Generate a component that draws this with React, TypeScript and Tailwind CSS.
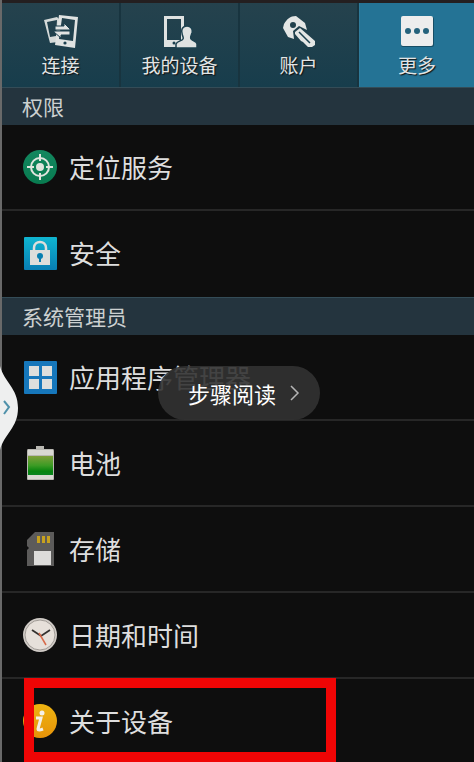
import type { ReactNode } from 'react';

function ConnectIcon() {
  return (
    <svg width="34" height="34" viewBox="0 0 34 34" aria-hidden="true">
      <path fillRule="evenodd" fill="#d5dad9" d="M0 5 13 2l2 2-1 23-8 1zM3 7l3 15 6-1 1-16z" />
      <path fillRule="evenodd" fill="#e0e3e2" d="M15 0 34 2l-3 31-20-3zM18 3l-3 21 14 2 2-21z" />
      <path fill="#e0e3e2" stroke="#1c414f" strokeWidth="1" d="M11 11h9V8l6 6v1H11zM26 16v4h-9v3l-7-6v-1z" />
      <circle cx="21" cy="28" r="1.6" fill="#1c414f" />
    </svg>
  );
}

function DeviceIcon() {
  return (
    <svg width="34" height="34" viewBox="0 0 34 34" aria-hidden="true">
      <path fillRule="evenodd" fill="#dfe2e1" d="M1 1h20v31H1zM4 4v21h14V4z" />
      <circle cx="11" cy="28" r="1.5" fill="#1c414f" />
      <path fill="#dfe2e1" stroke="#1c414f" strokeWidth="1.5" d="M24 11c4 0 6 3 5 7-1 3-2 4-1 6 1 2 6 2 6 5v4H13v-4c1-3 6-3 7-5 1-2-1-3-1-6-1-4 1-7 5-7z" />
    </svg>
  );
}

function KeyIcon() {
  return (
    <svg width="34" height="34" viewBox="0 0 34 34" aria-hidden="true">
      <path fillRule="evenodd" fill="#e4e6e5" d="M2 9C5 4 8 1 14 1l9 7 2 7-8-4-6 5 1 8-6-2-5-9zM11 7a3 3 0 1 0 0 6 3 3 0 0 0 0-6z" />
      <path fill="#e4e6e5" d="m13 17 5-4 15 13v4l-3 2h-4l-5-5-2-1-6-7z" />
      <path stroke="#1c414f" strokeWidth="1.5" d="m17 17 11 11" />
    </svg>
  );
}

function MoreIcon() {
  return (
    <svg width="34" height="34" viewBox="0 0 34 34" aria-hidden="true">
      <rect x="1" y="2" width="33" height="30" rx="2" fill="#174d65" />
      <rect x="1" y="1" width="32" height="30" rx="2" fill="#ededed" />
      <circle cx="8" cy="16" r="3" fill="#25627c" />
      <circle cx="17" cy="16" r="3" fill="#25627c" />
      <circle cx="26" cy="16" r="3" fill="#25627c" />
    </svg>
  );
}

function LocationIcon() {
  return (
    <svg width="34" height="34" viewBox="0 0 34 34" aria-hidden="true">
      <defs>
        <linearGradient id="location" x1="0" y1="0" x2="0" y2="1">
          <stop stopColor="#13875f" /><stop offset="1" stopColor="#087b50" />
        </linearGradient>
      </defs>
      <circle cx="17" cy="17" r="17" fill="url(#location)" />
      <circle cx="17" cy="17" r="9" fill="none" stroke="#e0e5df" strokeWidth="2" />
      <circle cx="17" cy="17" r="4" fill="#e0e5df" />
      <path stroke="#e0e5df" strokeWidth="2" d="M17 4v7m0 12v7M4 17h7m12 0h7" />
    </svg>
  );
}

function LockIcon() {
  return (
    <svg width="34" height="34" viewBox="0 0 34 34" aria-hidden="true">
      <defs>
        <linearGradient id="lock" x1="0" y1="0" x2="0" y2="1">
          <stop stopColor="#0fb5d0" /><stop offset="1" stopColor="#087eb4" />
        </linearGradient>
      </defs>
      <rect x="1" y="1" width="33" height="33" rx="1" fill="url(#lock)" />
      <path fill="none" stroke="#dededb" strokeWidth="2.5" d="M11 15v-3c0-8 12-8 12 0v3" />
      <path fill="#dededb" d="M7 14h20v15H7z" />
      <circle cx="17" cy="20" r="3" fill="#087fb0" />
      <path fill="#087fb0" d="M16 21h2v5h-2z" />
    </svg>
  );
}

function AppsIcon() {
  return (
    <svg width="34" height="34" viewBox="0 0 34 34" aria-hidden="true">
      <rect x="1" y="1" width="33" height="33" rx="1" fill="#1677bb" />
      <path fill="#dddfdd" d="M6 6h10v10H6zm13 0h10v10H19zM6 19h10v10H6zm13 0h10v10H19z" />
    </svg>
  );
}

function BatteryIcon() {
  return (
    <svg width="34" height="34" viewBox="0 0 34 34" aria-hidden="true">
      <defs>
        <linearGradient id="charge" x1="0" y1="0" x2="0" y2="1">
          <stop stopColor="#7f9f3a" /><stop offset=".5" stopColor="#3c9b24" /><stop offset=".8" stopColor="#07840f" /><stop offset="1" stopColor="#0a8420" />
        </linearGradient>
      </defs>
      <path fill="#b9b8b2" d="M13 0h8v3h9q1 0 1 2v28q0 1-1 1H5q-1 0-1-1V5q0-2 1-2h8z" />
      <path fill="#d9d8d2" d="M5 4h25v5H5zm0 25h25v4H5z" />
      <path fill="url(#charge)" d="M5 10h25v19H5z" />
    </svg>
  );
}

function StorageIcon() {
  return (
    <svg width="34" height="34" viewBox="0 0 34 34" aria-hidden="true">
      <path fill="#5c5b5a" d="M4 8 12 0h19v34H4V18l2-2-2-2z" />
      <path fill="#c7a11e" d="M14 4h3v7h-3zm5 0h3v7h-3zm5 0h3v7h-3z" />
      <path fill="#dddcda" d="M11 19h17v14H11z" />
    </svg>
  );
}

function ClockIcon() {
  return (
    <svg width="34" height="34" viewBox="0 0 34 34" aria-hidden="true">
      <circle cx="17" cy="17" r="17" fill="#d0cbc6" />
      <circle cx="17" cy="17" r="15" fill="#e6e0da" stroke="#918c87" strokeWidth=".8" />
      <path fill="none" stroke="#33302e" strokeWidth="1.8" d="m9 12 9 6 9-6" />
      <path stroke="#d76a4a" strokeWidth="1.5" d="m16 15 7 12" />
    </svg>
  );
}

function InfoIcon() {
  return (
    <svg width="34" height="34" viewBox="0 0 34 34" aria-hidden="true">
      <defs>
        <linearGradient id="info" x1="0" y1="0" x2="0" y2="1">
          <stop stopColor="#eeb411" /><stop offset="1" stopColor="#e79309" />
        </linearGradient>
      </defs>
      <circle cx="17" cy="17" r="17" fill="url(#info)" />
      <circle cx="19" cy="9" r="2.5" fill="#f4f0e8" />
      <path fill="none" stroke="#f4f0e8" strokeWidth="3" d="M13 14h5l-3 11q0 2 5 0" />
    </svg>
  );
}

const tabs = [
  { label: '连接', icon: <ConnectIcon /> },
  { label: '我的设备', icon: <DeviceIcon /> },
  { label: '账户', icon: <KeyIcon /> },
  { label: '更多', icon: <MoreIcon />, selected: true },
];

function SectionTitle({ children }: { children: ReactNode }) {
  return <h2 className="flex h-[38px] items-center border-t border-[#344c57] bg-[#24343e] pb-0.5 pl-5 text-[21px] leading-6 text-[#ccd0d0]">{children}</h2>;
}

function Row({ icon, label, last, marked }: { icon: ReactNode; label: string; last?: boolean; marked?: boolean }) {
  return (
    <li className={`relative h-[86px] ${last ? '' : 'border-b-2 border-[#272727]'}`}>
      <button className={`flex h-full w-full items-center gap-3 pl-[21px] text-left text-[26px] leading-8 text-[#dedede] ${last ? 'pb-0.5' : ''}`}>
        {icon}
        <span>{label}</span>
      </button>
      {marked && <div className="pointer-events-none absolute -top-px left-[22px] h-[84px] w-[312px] border-[10px] border-[#f00505]" />}
    </li>
  );
}

export default function App() {
  return (
    <div className="relative h-screen overflow-hidden font-['Noto_Sans_CJK_SC',sans-serif]">
      <main className="min-h-full border-l-2 border-[#696969] bg-[#0e0e0e]">
        <div className="h-[3px] bg-[#241f20]" />
        <nav className="grid h-[84px] grid-cols-[119fr_119fr_119fr_115fr]">
          {tabs.map((tab) => (
            <button
              key={tab.label}
              className={`flex flex-col items-center gap-[3px] pt-3 text-[19px] leading-[26px] text-[#e2e5e5] [text-shadow:1px_1px_1px_#111] ${tab.selected ? 'border-l border-[#2e7b9b] bg-[#247395]' : 'border-r-2 border-[#18343f] bg-linear-to-b from-[#25424d] to-[#173d4c]'}`}
            >
              {tab.icon}
              <span>{tab.label}</span>
            </button>
          ))}
        </nav>
        <section>
          <SectionTitle>权限</SectionTitle>
          <ul>
            <Row icon={<LocationIcon />} label="定位服务" />
            <Row icon={<LockIcon />} label="安全" last />
          </ul>
        </section>
        <section>
          <SectionTitle>系统管理员</SectionTitle>
          <ul>
            <Row icon={<AppsIcon />} label="应用程序管理器" />
            <Row icon={<BatteryIcon />} label="电池" />
            <Row icon={<StorageIcon />} label="存储" />
            <Row icon={<ClockIcon />} label="日期和时间" />
            <Row icon={<InfoIcon />} label="关于设备" last marked />
          </ul>
        </section>
      </main>
      <button aria-label="展开" className="absolute top-[366px] left-0">
        <svg width="19" height="84" viewBox="0 0 19 84" aria-hidden="true">
          <path fill="#eeefef" d="M0 0c4 16 18 22 18 42S4 68 0 84z" />
          <path fill="none" stroke="#4f91aa" strokeWidth="2" d="m4 35 5 6-5 7" />
        </svg>
      </button>
      <button className="absolute top-[366px] left-[158px] flex h-[54px] w-[162px] items-center gap-[14px] rounded-full bg-[#323232]/90 pl-[30px] text-[22px] leading-7 text-white">
        <span>步骤阅读</span>
        <svg width="10" height="16" viewBox="0 0 10 16" aria-hidden="true">
          <path fill="none" stroke="#b5b5b5" strokeWidth="1.5" d="m1 1 7 7-7 7" />
        </svg>
      </button>
    </div>
  );
}
